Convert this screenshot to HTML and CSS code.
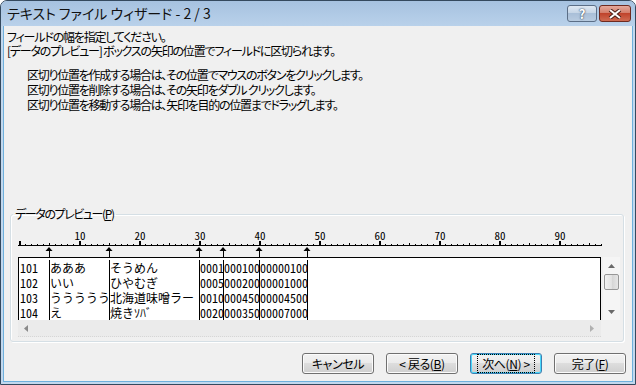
FILE: index.html
```html
<html>
  <head>
    <meta charset="utf-8" />
    <title>テキスト ファイル ウィザード - 2 / 3</title>
    <link rel="stylesheet" href="styles.css">
  </head>
  <body>
    <div class="window">
      <div class="titlebar">
        <div class="title">テキスト ファイル ウィザード - 2 / 3</div>
        <div class="caption-btns">
          <div class="cap help">?</div>
          <div class="cap close">
            <svg width="14" height="10" viewBox="0 0 14 10">
              <path d="M2 1 L12 9 M12 1 L2 9" stroke="#4a1f18" stroke-width="4" />
              <path d="M2 1 L12 9 M12 1 L2 9" stroke="#ffffff" stroke-width="2" />
            </svg>
          </div>
        </div>
      </div>
      <div class="client">
        <div class="intro">
          <div>フィールドの幅を指定してください。</div>
          <div>[データのプレビュー] ボックスの矢印の位置でフィールドに区切られます。</div>
        </div>
        <div class="howto">
          <div>区切り位置を作成する場合は、その位置でマウスのボタンをクリックします。</div>
          <div>区切り位置を削除する場合は、その矢印をダブル クリックします。</div>
          <div>区切り位置を移動する場合は、矢印を目的の位置までドラッグします。</div>
        </div>

        <fieldset class="group">
          <legend>データのプレビュー(<u>P</u>)</legend>
          <div class="preview">
            <div class="preview-main">
              <svg class="ruler" width="584" height="29" viewBox="0 0 584 29">
                <defs>
                  <pattern id="minor" x="1" y="0" width="6" height="29" patternUnits="userSpaceOnUse">
                    <rect x="0" y="16" width="1" height="1" fill="#000" />
                  </pattern>
                  <pattern id="mid" x="31" y="0" width="60" height="29" patternUnits="userSpaceOnUse">
                    <rect x="0" y="15" width="1" height="2" fill="#000" />
                  </pattern>
                  <pattern id="major" x="1" y="0" width="60" height="29" patternUnits="userSpaceOnUse">
                    <rect x="0" y="13" width="2" height="4" fill="#000" />
                  </pattern>
                </defs>
                <rect x="0" y="17" width="584" height="1" fill="#000" />
                <rect x="1" y="0" width="583" height="29" fill="url(#minor)" />
                <rect x="1" y="0" width="583" height="29" fill="url(#mid)" />
                <rect x="0" y="0" width="584" height="29" fill="url(#major)" />
                <g class="ruler-nums">
                  <text x="62" y="12">10</text>
                  <text x="122" y="12">20</text>
                  <text x="182" y="12">30</text>
                  <text x="242" y="12">40</text>
                  <text x="302" y="12">50</text>
                  <text x="362" y="12">60</text>
                  <text x="422" y="12">70</text>
                  <text x="482" y="12">80</text>
                  <text x="542" y="12">90</text>
                </g>
                <g fill="#000">
                  <path d="M31 19 L34.5 23 L27.5 23 Z M91 19 L94.5 23 L87.5 23 Z" />
                  <path d="M181 19 L184.5 23 L177.5 23 Z M205 19 L208.5 23 L201.5 23 Z" />
                  <path d="M241 19 L244.5 23 L237.5 23 Z M289 19 L292.5 23 L285.5 23 Z" />
                  <rect x="31" y="23" width="1" height="6" />
                  <rect x="91" y="23" width="1" height="6" />
                  <rect x="181" y="23" width="1" height="6" />
                  <rect x="205" y="23" width="1" height="6" />
                  <rect x="241" y="23" width="1" height="6" />
                  <rect x="289" y="23" width="1" height="6" />
                </g>
              </svg>
              <div class="databox">
                <div class="row">
                  <span class="c1">101</span><span class="c2">あああ</span><span class="c3">そうめん</span><span class="c4">0001</span><span class="c5">000100</span><span class="c6">00000100</span><span class="c7"></span>
                </div>
                <div class="row">
                  <span class="c1">102</span><span class="c2">いい</span><span class="c3">ひやむぎ</span><span class="c4">0005</span><span class="c5">000200</span><span class="c6">00001000</span><span class="c7"></span>
                </div>
                <div class="row">
                  <span class="c1">103</span><span class="c2">ううううう</span><span class="c3">北海道味噌ラー</span><span class="c4">0010</span><span class="c5">000450</span><span class="c6">00004500</span><span class="c7"></span>
                </div>
                <div class="row">
                  <span class="c1">104</span><span class="c2">え</span><span class="c3">焼きｿﾊﾞ</span><span class="c4">0020</span><span class="c5">000350</span><span class="c6">00007000</span><span class="c7"></span>
                </div>
              </div>
              <div class="hscroll">
                <svg width="5" height="7" viewBox="0 0 5 7"><path d="M4 0 V7 L0 3.5 Z" fill="#8a8a8a" /></svg>
                <svg class="faded" width="5" height="7" viewBox="0 0 5 7"><path d="M0 0 V7 L4 3.5 Z" fill="#8a8a8a" /></svg>
              </div>
            </div>
            <div class="vscroll">
              <svg width="7" height="4" viewBox="0 0 7 4"><path d="M0 4 H7 L3.5 0 Z" fill="#6a6a6a" /></svg>
              <div class="thumb"></div>
              <svg class="down" width="7" height="4" viewBox="0 0 7 4"><path d="M0 0 H7 L3.5 4 Z" fill="#6a6a6a" /></svg>
            </div>
          </div>
        </fieldset>

        <div class="buttons">
          <div class="btn">キャンセル</div>
          <div class="btn">&lt; 戻る(<u>B</u>)</div>
          <div class="btn default"><span class="focus">次へ(<u>N</u>) &gt;</span></div>
          <div class="btn">完了(<u>F</u>)</div>
        </div>
      </div>
    </div>
  </body>
</html>
```

FILE: styles.css
```css
* {
  margin: 0;
  padding: 0;
  box-sizing: border-box;
}
body {
  background: #ffffff;
  font-family: "Noto Sans CJK JP", "Noto Sans", sans-serif;
  font-size: 12px;
  color: #000;
}
.window {
  width: 636px;
  height: 385px;
  border: 1px solid #34495e;
  border-radius: 7px 7px 0 0;
  background: #c2d8ee;
  padding: 0 2px 2px 2px;
  display: flex;
  flex-direction: column;
}
.titlebar {
  height: 25px;
  margin: 0 -2px;
  padding: 0 4px 0 6px;
  border-radius: 6px 6px 0 0;
  background: linear-gradient(#a6c2e0, #b9d1ea);
  display: flex;
  justify-content: space-between;
}
.title {
  font-size: 14px;
  line-height: 25px;
  color: #111;
  font-feature-settings: "palt";
}
.caption-btns {
  display: flex;
  gap: 2px;
  padding-top: 4px;
}
.cap {
  height: 17px;
  border: 1px solid #5b6e86;
  border-radius: 3px;
  display: flex;
  align-items: center;
  justify-content: center;
}
.help {
  width: 30px;
  background: linear-gradient(#dfe8f2, #c3d3e5 50%, #a9bfd8 50%, #b8cbe0);
  color: #fff;
  font-weight: bold;
  font-size: 13px;
  text-shadow: 0 0 2px #33475e, 0 0 1px #33475e;
}
.close {
  width: 32px;
  border-color: #6e2a20;
  background: linear-gradient(#e5a99c, #d27966 50%, #c0432c 50%, #cf6b52);
}
.client {
  flex: 1;
  background: #f0f0f0;
  border: 1px solid #6fb0dc;
  border-top: none;
  display: flex;
  flex-direction: column;
  font-feature-settings: "palt";
}
.intro {
  padding: 4px 0 0 3px;
  line-height: 14px;
  letter-spacing: -1.2px;
}
.howto {
  padding: 9px 0 0 23px;
  line-height: 15px;
  letter-spacing: -1.25px;
}
.group {
  margin: 95px 0 0 6px;
  width: 614px;
  border: 1px solid #d5dfe5;
  border-radius: 3px;
  box-shadow: inset 1px 1px #ffffff, 1px 1px #ffffff;
  padding: 7px 0 4px 7px;
}
.group legend {
  margin-left: -5px;
  padding: 0 2px;
  line-height: 14px;
  letter-spacing: -1.4px;
}
.preview {
  display: flex;
}
.preview-main {
  width: 584px;
}
.ruler {
  display: block;
}
.ruler-nums text {
  font-family: "Noto Sans CJK JP", sans-serif;
  font-size: 11px;
  font-feature-settings: "hwid";
  text-anchor: middle;
}
.databox {
  height: 63px;
  width: 583px;
  background: #fff;
  border: 1px solid #000;
  border-bottom: none;
  padding-top: 2px;
  overflow: hidden;
  font-feature-settings: "hwid";
}
.row {
  display: flex;
  height: 15px;
  line-height: 15px;
  white-space: nowrap;
}
.row span {
  overflow: hidden;
  border-left: 1px solid #000;
  flex: none;
}
.row .c1 {
  width: 30px;
  border-left: none;
  padding-left: 1px;
}
.c2 { width: 60px; }
.c3 { width: 90px; }
.c4 { width: 24px; }
.c5 { width: 36px; }
.c6 { width: 48px; }
.row .c7 { flex: 1; }
.hscroll {
  height: 17px;
  width: 583px;
  background: #ebebeb;
  border-bottom: 1px dotted #d6d6d6;
  display: flex;
  align-items: center;
  justify-content: space-between;
  padding: 0 6px 0 6px;
}
.hscroll .faded {
  opacity: 0.6;
}
.vscroll {
  margin: 29px 0 0 1px;
  width: 17px;
  height: 63px;
  background: #f5f5f5;
  display: flex;
  flex-direction: column;
  align-items: center;
  padding-top: 7px;
}
.thumb {
  width: 15px;
  height: 16px;
  margin-top: 6px;
  border: 1px solid #979797;
  border-radius: 2px;
  background: linear-gradient(90deg, #f3f3f3, #e2e2e2 50%, #d4d4d4 50%, #e6e6e6);
}
.vscroll .down {
  margin-top: 20px;
}
.buttons {
  display: flex;
  justify-content: flex-end;
  gap: 12px;
  margin-top: 11px;
  padding-right: 6px;
}
.btn {
  width: 72px;
  height: 21px;
  border: 1px solid #707070;
  border-radius: 3px;
  background: linear-gradient(#f2f2f2, #ebebeb 50%, #dddddd 50%, #cfcfcf);
  box-shadow: inset 0 0 0 1px #fbfbfb;
  display: flex;
  align-items: center;
  justify-content: center;
  line-height: 15px;
  letter-spacing: -0.4px;
}
.btn.default {
  border-color: #3c7fb1;
  box-shadow: inset 0 0 0 1px #48d8fb;
}
.focus {
  outline: 1px dotted #000;
  outline-offset: 1px;
  padding: 0 3px;
}
```
